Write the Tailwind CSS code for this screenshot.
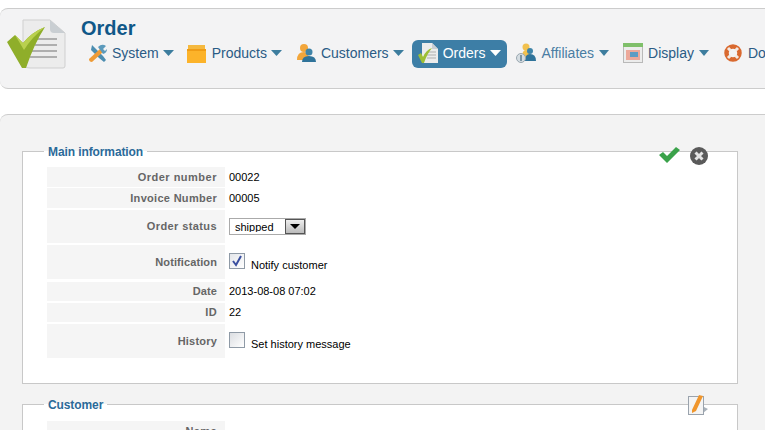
<!DOCTYPE html>
<html lang="en">
<head>
    <meta charset="UTF-8">
    <title>Order</title>
    <script src="https://cdn.jsdelivr.net/npm/@tailwindcss/browser@4"></script>
</head>
<body class="bg-white h-[430px] w-[765px] overflow-hidden font-['Liberation_Sans',Arial,sans-serif]">
    <!-- Top bar -->
    <div class="mt-2 h-[81px] w-[800px] flex bg-[#f3f3f4] border border-l-0 border-[#cccccc] rounded-l-[8px]">
        <div class="w-[81px] shrink-0 pl-[6px] pt-[9px]">
            <svg width="60" height="52" viewBox="0 0 60 52">
                <path d="M17 2H44L59 15V48Q59 50 57 50H24Q17 50 17 44Z" fill="#ececec" stroke="#cfcfcf"/>
                <path d="M44 2L59 15H48Q44 15 44 11Z" fill="#c9ced2"/>
                <path d="M29 21H51M29 27H51M26 33H51M24 39H51" stroke="#aeaeae" stroke-width="2"/>
                <path d="M1 24L9 17L17 25Q26 14 39 9Q28 26 20 50H16Z" fill="#8fae2a"/>
                <path d="M9 17L17 25Q26 14 39 9Q26 19 18 32Z" fill="#b9d04e"/>
            </svg>
        </div>
        <div class="flex-1">
            <h1 class="mt-[7px] h-[24px] text-[20px] leading-[24px] font-bold text-[#0f5788]">Order</h1>
            <nav class="mt-0 ml-[1px] flex gap-[2px] text-[14px] text-[#2a5b85]">
                <a class="h-[28px] pl-[6px] pr-[5px] pb-[2px] flex items-center">
                    <svg class="mr-[5px]" width="19" height="19" viewBox="0 0 19 19">
                        <path d="M4 1L9 6L15 12L18 16L16 18L11 14L3 6Z" fill="#4c8db0"/>
                        <path d="M1 15L12 5L15 8L4 18Q1 18 1 15Z" fill="#ee9b36"/>
                        <path d="M10 3Q14 -1 18 2L15 5L17 7L19 5Q19 9 15 10Z" fill="#5b9abc"/>
                    </svg>
                    System
                    <svg class="ml-[4px]" width="11" height="6" viewBox="0 0 11 6"><path d="M0 0H11L5.500 6Z" fill="#3d7d9e"/></svg>
                </a>
                <a class="h-[28px] pl-[6px] pr-[6px] pb-[2px] flex items-center">
                    <svg class="mr-[6px]" width="19" height="20" viewBox="0 0 19 20">
                        <path d="M1 2H18V7H1Z" fill="#f5b93f"/>
                        <path d="M0 6H19V20H0Z" fill="#fcb32a"/>
                        <path d="M0 6H19V8H0Z" fill="#f09c15"/>
                    </svg>
                    Products
                    <svg class="ml-[4px]" width="11" height="6" viewBox="0 0 11 6"><path d="M0 0H11L5.500 6Z" fill="#3d7d9e"/></svg>
                </a>
                <a class="h-[28px] pl-[6px] pr-[6px] pb-[2px] flex items-center">
                    <svg class="mr-[5px]" width="20" height="20" viewBox="0 0 20 20">
                        <circle cx="8" cy="5" r="4" fill="#f2a63b"/>
                        <path d="M1 17Q1 9 8 9Q13 9 13 17Z" fill="#f2a63b"/>
                        <circle cx="13" cy="9" r="3.500" fill="#3f84a8"/>
                        <path d="M6 19Q6 13 13 13Q20 13 20 19Z" fill="#2f739a"/>
                    </svg>
                    Customers
                    <svg class="ml-[4px]" width="11" height="6" viewBox="0 0 11 6"><path d="M0 0H11L5.500 6Z" fill="#3d7d9e"/></svg>
                </a>
                <a class="h-[28px] pl-[6px] pr-[6px] pb-[2px] mr-px flex items-center bg-[#3d7ea6] rounded-[6px] text-white">
                    <svg class="mr-[5px]" width="20" height="20" viewBox="0 0 20 20">
                        <path d="M4 0H14L20 6V20H4Z" fill="#ececec"/>
                        <path d="M14 0L20 6H14Z" fill="#c9ced2"/>
                        <path d="M9 9H18M9 12H18M9 15H18" stroke="#aeaeae"/>
                        <path d="M0 12L3 10L5 14Q8 7 14 5Q9 11 6 20H4Z" fill="#9dbf35"/>
                    </svg>
                    Orders
                    <svg class="ml-[5px]" width="11" height="6" viewBox="0 0 11 6"><path d="M0 0H11L5.500 6Z" fill="#ffffff"/></svg>
                </a>
                <a class="h-[28px] pl-[6px] pr-[6px] pb-[2px] flex items-center text-[#4a7da3]">
                    <svg class="mr-[5px]" width="20" height="20" viewBox="0 0 20 20">
                        <circle cx="10" cy="4" r="3.500" fill="#f2c14e"/>
                        <path d="M6 15Q6 7 10 7Q14 7 14 15Z" fill="#f2c14e"/>
                        <circle cx="14" cy="8" r="3" fill="#3f84a8"/>
                        <path d="M9 18Q9 11 14 11Q20 11 20 18Z" fill="#2f739a"/>
                        <circle cx="5" cy="15" r="4.500" fill="#d5dde2" stroke="#9aa7b0"/>
                        <path d="M5 12V18" stroke="#5e7d90" stroke-width="1.500"/>
                    </svg>
                    Affiliates
                    <svg class="ml-[5px]" width="10" height="6" viewBox="0 0 10 6"><path d="M0 0H10L5 6Z" fill="#3d7d9e"/></svg>
                </a>
                <a class="h-[28px] pl-[6px] pr-[6px] pb-[2px] mr-px flex items-center">
                    <svg class="mr-[5px]" width="20" height="20" viewBox="0 0 20 20">
                        <rect x="0.500" y="0.500" width="19" height="19" fill="#ececec" stroke="#b9b9b9"/>
                        <rect x="0" y="0" width="20" height="4" fill="#7fbf6a"/>
                        <rect x="3" y="7" width="14" height="10" fill="#eca89a"/>
                        <rect x="7" y="9" width="8" height="5" fill="#5d9cc4"/>
                    </svg>
                    Display
                    <svg class="ml-[5px]" width="10" height="6" viewBox="0 0 10 6"><path d="M0 0H10L5 6Z" fill="#3d7d9e"/></svg>
                </a>
                <a class="h-[28px] pl-[6px] pr-[6px] pb-[2px] flex items-center">
                    <svg class="mr-[6px]" width="18" height="18" viewBox="0 0 18 18">
                        <circle cx="9" cy="9" r="6.500" fill="none" stroke="#d9692f" stroke-width="4.500"/>
                        <path d="M4 4L6.500 6.500M14 4L11.500 6.500M4 14L6.500 11.500M14 14L11.500 11.500" stroke="#f3e9e2" stroke-width="3"/>
                    </svg>
                    Documentation
                </a>
            </nav>
        </div>
    </div>

    <!-- Content panel -->
    <div class="relative mt-[25px] h-[400px] bg-[#f3f3f3] border-t border-[#cccccc] rounded-tl-[8px] pl-[22px] pr-[27px] pt-[28px]">
        <fieldset class="relative h-[241px] bg-white border border-[#c8c8c8] pl-[24px] pt-[8px]">
            <legend class="ml-[-3px] px-[4px] pt-[2px] text-[12px] leading-[14px] font-bold tracking-[-0.1px] text-[#2b6a99]">Main information</legend>
            <div class="absolute right-[29px] top-[-12px] flex items-start gap-[10px]">
                <svg width="21" height="16" viewBox="0 0 21 16"><path d="M0 8L4 5L8 9L17 0L21 3L8 16Z" fill="#3aa24a"/></svg>
                <svg width="18" height="18" viewBox="0 0 18 18">
                    <circle cx="9" cy="9" r="9" fill="#5a5a5a"/>
                    <path d="M5.500 5.500L12.500 12.500M12.500 5.500L5.500 12.500" stroke="#e4e4e4" stroke-width="3"/>
                </svg>
            </div>
            <div class="grid grid-cols-[178px_1fr] text-[11px] text-black">
                <div class="h-[20px] mb-px bg-[#f5f5f5] pr-[8px] text-right font-bold tracking-[0.5px] text-[#666666] leading-[20px]">Order number</div>
                <div class="h-[20px] pl-[4px] leading-[20px]">00022</div>
                <div class="h-[20px] mb-[2px] bg-[#f5f5f5] pr-[8px] text-right font-bold tracking-[0.3px] text-[#666666] leading-[20px]">Invoice Number</div>
                <div class="h-[20px] pl-[4px] leading-[20px]">00005</div>
                <div class="h-[33px] mb-[2px] bg-[#f5f5f5] pr-[8px] text-right font-bold tracking-[0.4px] text-[#666666] leading-[33px]">Order status</div>
                <div class="pl-[4px] pt-[8px]">
                    <div class="relative w-[77px] h-[17px]">
                        <select class="appearance-none w-[77px] h-[17px] border border-[#aaaaaa] bg-white pl-[5px] pb-[2px] text-black"><option>shipped</option></select>
                        <span class="absolute right-px top-px w-[20px] h-[15px] flex items-center justify-center bg-gradient-to-b from-[#eeeeee] to-[#bbbbbb] border border-[#555555] pointer-events-none">
                            <svg width="10" height="5" viewBox="0 0 10 5"><path d="M0 0H10L5 5Z" fill="#000000"/></svg>
                        </span>
                    </div>
                </div>
                <div class="h-[34px] mb-[3px] bg-[#f5f5f5] pr-[8px] text-right font-bold tracking-[0.1px] text-[#666666] leading-[34px]">Notification</div>
                <div class="pl-[4px] pt-[8px] flex">
                    <span class="w-[16px] h-[16px] border border-[#8f9aa6] bg-gradient-to-br from-[#e4e6ea] to-[#ffffff] flex items-center justify-center">
                        <svg width="12" height="12" viewBox="0 0 12 12"><path d="M2 6L5 10L10 1" fill="none" stroke="#3a4fa0" stroke-width="2"/></svg>
                    </span>
                    <span class="ml-[6px] mt-[4px]">Notify customer</span>
                </div>
                <div class="h-[19px] mb-[2px] bg-[#f5f5f5] pr-[8px] text-right font-bold tracking-[0.1px] text-[#666666] leading-[19px]">Date</div>
                <div class="h-[19px] pl-[4px] leading-[19px]">2013-08-08 07:02</div>
                <div class="h-[19px] mb-[2px] bg-[#f5f5f5] pr-[8px] text-right font-bold tracking-[0.4px] text-[#666666] leading-[19px]">ID</div>
                <div class="h-[19px] pl-[4px] leading-[19px]">22</div>
                <div class="h-[34px] bg-[#f5f5f5] pr-[8px] text-right font-bold tracking-[0.2px] text-[#666666] leading-[34px]">History</div>
                <div class="pl-[4px] pt-[8px] flex">
                    <span class="w-[16px] h-[16px] border border-[#8f9aa6] bg-gradient-to-br from-[#dcdee2] to-[#ffffff]"></span>
                    <span class="ml-[6px] mt-[4px]">Set history message</span>
                </div>
            </div>
        </fieldset>
        <fieldset class="relative mt-[12px] h-[80px] bg-white border border-[#c8c8c8] pl-[24px] pt-[9px]">
            <legend class="ml-[-3px] px-[4px] pt-[2px] text-[12px] leading-[14px] font-bold tracking-[-0.1px] text-[#2b6a99]">Customer</legend>
            <div class="absolute right-[29px] top-[-18px]">
                <svg width="20" height="22" viewBox="0 0 20 22">
                    <path d="M14 12L20 15L15 19Z" fill="#a9b2bb"/>
                    <rect x="0.500" y="2.500" width="15" height="18" fill="#f4f4f4" stroke="#9aa3ad"/>
                    <path d="M4 16L11 1L15 2L8 17L4 19Z" fill="#f0962c"/>
                </svg>
            </div>
            <div class="grid grid-cols-[178px_1fr] text-[11px]">
                <div class="h-[20px] bg-[#f5f5f5] pr-[8px] text-right font-bold tracking-[0.4px] text-[#666666] leading-[20px]">Name</div>
                <div></div>
            </div>
        </fieldset>
    </div>
</body>
</html>
